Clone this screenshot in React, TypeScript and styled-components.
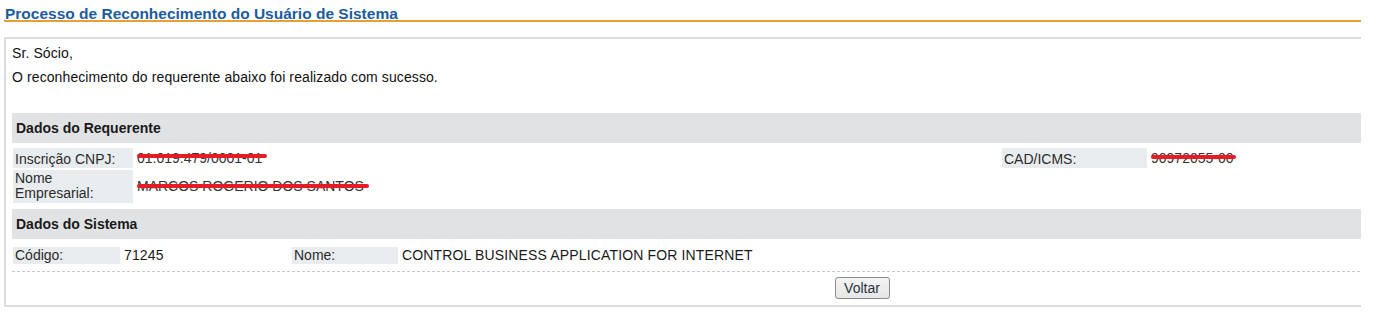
import React from "react";
import styled, { createGlobalStyle } from "styled-components";

const GlobalStyle = createGlobalStyle`
  html, body {
    margin: 0;
    padding: 0;
    background: #ffffff;
  }
  body {
    font-family: Arial, "Liberation Sans", Helvetica, sans-serif;
    color: #000;
  }
`;

const CONTENT_WIDTH = 1716;

const Page = styled.div`
  width: 1361px;
  overflow: hidden;
  padding-left: 4px;
  box-sizing: border-box;
  font-family: Arial, "Liberation Sans", Helvetica, sans-serif;
`;

const Title = styled.h1`
  width: ${CONTENT_WIDTH}px;
  box-sizing: border-box;
  margin: 0;
  padding: 7px 1px 0;
  font-size: 15.5px;
  line-height: 13px;
  font-weight: bold;
  color: #1b5c9e;
  border-bottom: 2px solid #e3a134;
`;

const Panel = styled.section`
  width: ${CONTENT_WIDTH}px;
  box-sizing: border-box;
  margin-top: 15px;
  border: 2px solid #dcdcdc;
  padding: 2px 6px 6px;
`;

const Message = styled.div`
  font-size: 14px;
  line-height: 24px;
  letter-spacing: 0.1px;
  color: #111;
  margin-bottom: 24px;
`;

const Band = styled.div`
  height: 30px;
  background: #e1e2e4;
  display: flex;
  align-items: center;
  padding-left: 4px;
  font-size: 14px;
  font-weight: bold;
  color: #1a1a1a;
`;

const FieldGrid = styled.div<{ $cols: string; $top: number; $bottom: number }>`
  display: grid;
  grid-template-columns: ${(p) => p.$cols};
  column-gap: 2px;
  row-gap: 2px;
  margin: ${(p) => p.$top}px 0 ${(p) => p.$bottom}px 1px;
  font-size: 14px;
  line-height: 15px;
`;

const Label = styled.div<{ $pad: string }>`
  background: #e8ecef;
  color: #2b2b2b;
  padding: ${(p) => p.$pad};
`;

const Value = styled.div<{ $pad?: string }>`
  color: #1a1a1a;
  padding: ${(p) => p.$pad ?? "1px 2px"};
  align-self: center;
  white-space: nowrap;
  letter-spacing: 0.15px;
`;

const Redacted = styled.span<{ $lineTop: number; $extra: number }>`
  position: relative;
  display: inline-block;
  color: #333;
  letter-spacing: 0;
  &::after {
    content: "";
    position: absolute;
    left: 0;
    right: -${(p) => p.$extra}px;
    top: ${(p) => p.$lineTop}px;
    height: 4px;
    border-radius: 2px;
    background: #e51c25;
  }
`;

const Divider = styled.div`
  height: 1px;
  margin-top: 7px;
  background-image: repeating-linear-gradient(
    to right,
    #c8c8c8 0,
    #c8c8c8 3px,
    transparent 3px,
    transparent 5px
  );
`;

const Footer = styled.div`
  display: flex;
  justify-content: center;
  margin-top: 5px;
`;

const Button = styled.button`
  width: 55px;
  height: 22px;
  box-sizing: border-box;
  padding: 0;
  font-family: Arial, "Liberation Sans", Helvetica, sans-serif;
  font-size: 14px;
  color: #2a3441;
  background: linear-gradient(#f4f4f4, #e6e6e6);
  border: 1px solid #8a8a8a;
  border-radius: 3px;
  cursor: pointer;
`;

export default function App() {
  return (
    <>
      <GlobalStyle />
      <Page>
        <Title>Processo de Reconhecimento do Usuário de Sistema</Title>
        <Panel>
          <Message>
            <div>Sr. Sócio,</div>
            <div>O reconhecimento do requerente abaixo foi realizado com sucesso.</div>
          </Message>

          <Band>Dados do Requerente</Band>
          <FieldGrid $cols="120px 865px 145px 1fr" $top={5} $bottom={6}>
            <Label $pad="4px 2px 1px">Inscrição CNPJ:</Label>
            <Value $pad="2px 2px 1px">
              <Redacted $lineTop={3} $extra={5}>01.019.479/0001-01</Redacted>
            </Value>
            <Label $pad="4px 2px 1px">CAD/ICMS:</Label>
            <Value $pad="2px 2px 1px">
              <Redacted $lineTop={4} $extra={2}>90972055-00</Redacted>
            </Value>
            <Label $pad="1px 2px 2px">
              Nome
              <br />
              Empresarial:
            </Label>
            <Value>
              <Redacted $lineTop={5} $extra={5}>MARCOS ROGERIO DOS SANTOS</Redacted>
            </Value>
          </FieldGrid>

          <Band>Dados do Sistema</Band>
          <FieldGrid $cols="107px 168px 106px 1fr" $top={8} $bottom={0}>
            <Label $pad="1px 2px">Código:</Label>
            <Value>71245</Value>
            <Label $pad="1px 2px">Nome:</Label>
            <Value>CONTROL BUSINESS APPLICATION FOR INTERNET</Value>
          </FieldGrid>

          <Divider />
          <Footer>
            <Button type="button">Voltar</Button>
          </Footer>
        </Panel>
      </Page>
    </>
  );
}
